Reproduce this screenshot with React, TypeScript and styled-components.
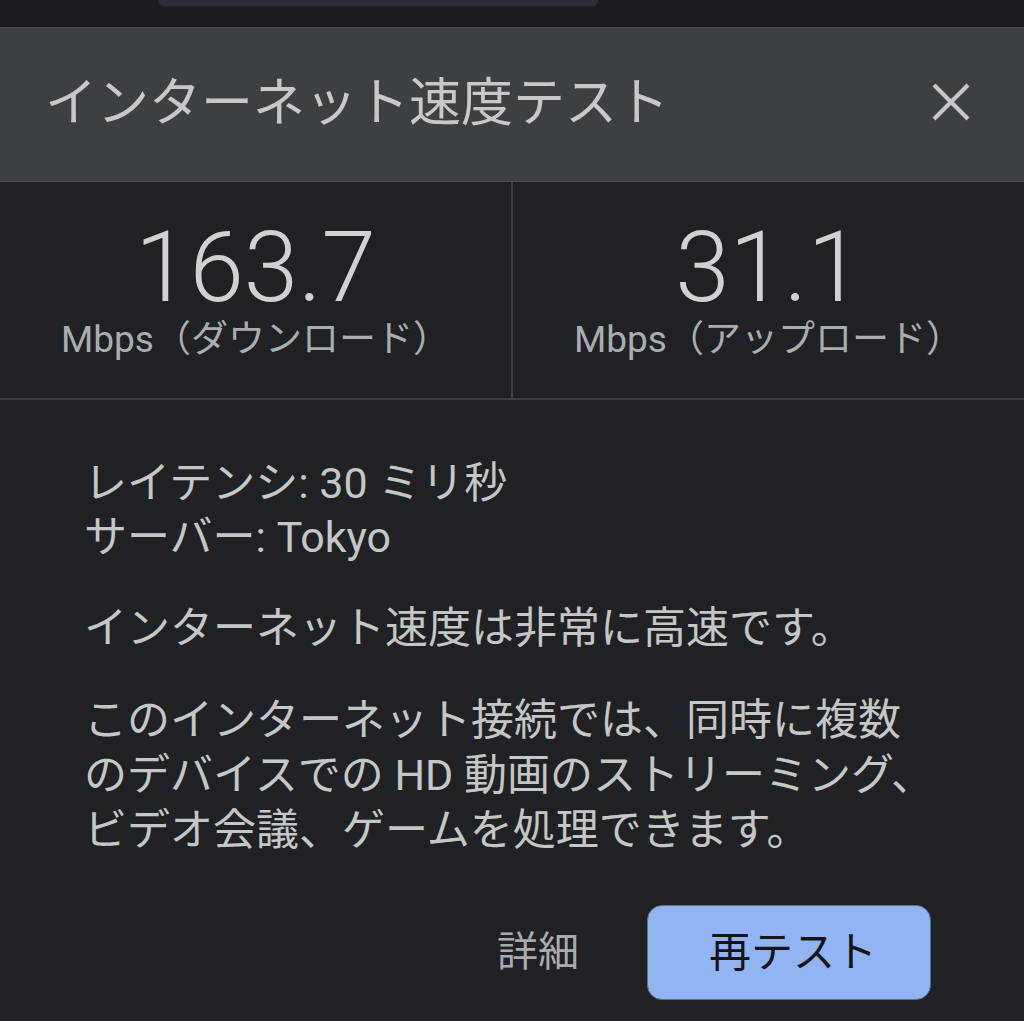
import React from "react";
import styled, { createGlobalStyle } from "styled-components";

const Global = createGlobalStyle`
  html, body {
    margin: 0;
    padding: 0;
    background: #202124;
  }
  body {
    font-family: Roboto, "Noto Sans CJK JP", sans-serif;
    color: #c4c7c5;
  }
  * { box-sizing: border-box; }
`;

const Page = styled.div`
  width: 1024px;
  height: 1021px;
  overflow: hidden;
  background: #202124;
  display: flex;
  flex-direction: column;
`;

const TopStrip = styled.div`
  height: 27px;
  background: #1b1c1f;
  display: flex;
  padding-left: 158px;
`;

const SearchEdge = styled.div`
  width: 440px;
  height: 6px;
  background: #2b3038;
  border-radius: 0 0 34px 34px;
  box-shadow: 0 1px 0 #23272d;
`;

const Header = styled.header`
  height: 155px;
  background: #3c4043;
  border-top: 1px solid #4a4d51;
  border-bottom: 1px solid #46494c;
  display: flex;
  align-items: center;
  justify-content: space-between;
  padding: 0 54px 6px 45px;
`;

const Title = styled.h1`
  margin: 0 0 6px;
  font-size: 52px;
  font-weight: 400;
  color: #c6c8ca;
  letter-spacing: 0;
`;

const CloseButton = styled.button`
  width: 38px;
  height: 38px;
  padding: 0;
  border: none;
  background: none;
  display: flex;
  align-items: center;
  justify-content: center;
`;

const Stats = styled.section`
  display: grid;
  grid-template-columns: 1fr 2px 1fr;
  border-bottom: 2px solid #3a3d41;
  height: 218px;
`;

const Divider = styled.div`
  background: #3a3d41;
`;

const Stat = styled.div`
  display: flex;
  flex-direction: column;
  align-items: center;
  padding-top: 36px;
`;

const Number = styled.div`
  font-family: Roboto, sans-serif;
  font-weight: 300;
  font-size: 98px;
  line-height: 100px;
  color: #cfd1d3;
`;

const Label = styled.div`
  font-size: 37px;
  line-height: 44px;
  color: #aaadb0;
  white-space: nowrap;
`;

const Body = styled.section`
  flex: 1;
  display: flex;
  flex-direction: column;
  padding: 56px 93px 0 84px;
`;

const Info = styled.p`
  margin: 0;
  font-size: 43px;
  line-height: 54px;
  color: #c4c7c5;
`;

const Summary = styled.p`
  margin: 37px 0 0;
  font-size: 43px;
  line-height: 54px;
  color: #c4c7c5;
`;

const Detail = styled.p`
  margin: 38px 0 0;
  font-size: 43px;
  line-height: 55px;
  color: #c4c7c5;
  white-space: nowrap;
`;

const Actions = styled.div`
  margin-top: 47px;
  display: flex;
  justify-content: flex-end;
  align-items: center;
  gap: 68px;
`;

const TextButton = styled.button`
  border: none;
  background: none;
  padding: 0 0 10px;
  font-family: Roboto, "Noto Sans CJK JP", sans-serif;
  font-size: 41px;
  color: #a9acaf;
`;

const PrimaryButton = styled.button`
  width: 284px;
  height: 95px;
  border: 1px solid #5e6d8a;
  border-radius: 15px;
  background: #93b4f2;
  color: #141518;
  font-family: Roboto, "Noto Sans CJK JP", sans-serif;
  font-size: 42px;
  display: flex;
  align-items: center;
  justify-content: center;
  padding: 0 0 8px 8px;
`;

export default function App() {
  return (
    <Page>
      <Global />
      <TopStrip>
        <SearchEdge />
      </TopStrip>
      <Header>
        <Title>インターネット速度テスト</Title>
        <CloseButton aria-label="閉じる">
          <svg width="38" height="38" viewBox="0 0 38 38">
            <path
              d="M2 2 L36 36 M36 2 L2 36"
              stroke="#c6c8ca"
              strokeWidth="4.2"
              strokeLinecap="butt"
            />
          </svg>
        </CloseButton>
      </Header>
      <Stats>
        <Stat>
          <Number>163.7</Number>
          <Label>Mbps（ダウンロード）</Label>
        </Stat>
        <Divider />
        <Stat>
          <Number>31.1</Number>
          <Label>Mbps（アップロード）</Label>
        </Stat>
      </Stats>
      <Body>
        <Info>
          レイテンシ: 30 ミリ秒
          <br />
          サーバー: Tokyo
        </Info>
        <Summary>インターネット速度は非常に高速です。</Summary>
        <Detail>
          このインターネット接続では、同時に複数
          <br />
          のデバイスでの HD 動画のストリーミング、
          <br />
          ビデオ会議、ゲームを処理できます。
        </Detail>
        <Actions>
          <TextButton>詳細</TextButton>
          <PrimaryButton>再テスト</PrimaryButton>
        </Actions>
      </Body>
    </Page>
  );
}
